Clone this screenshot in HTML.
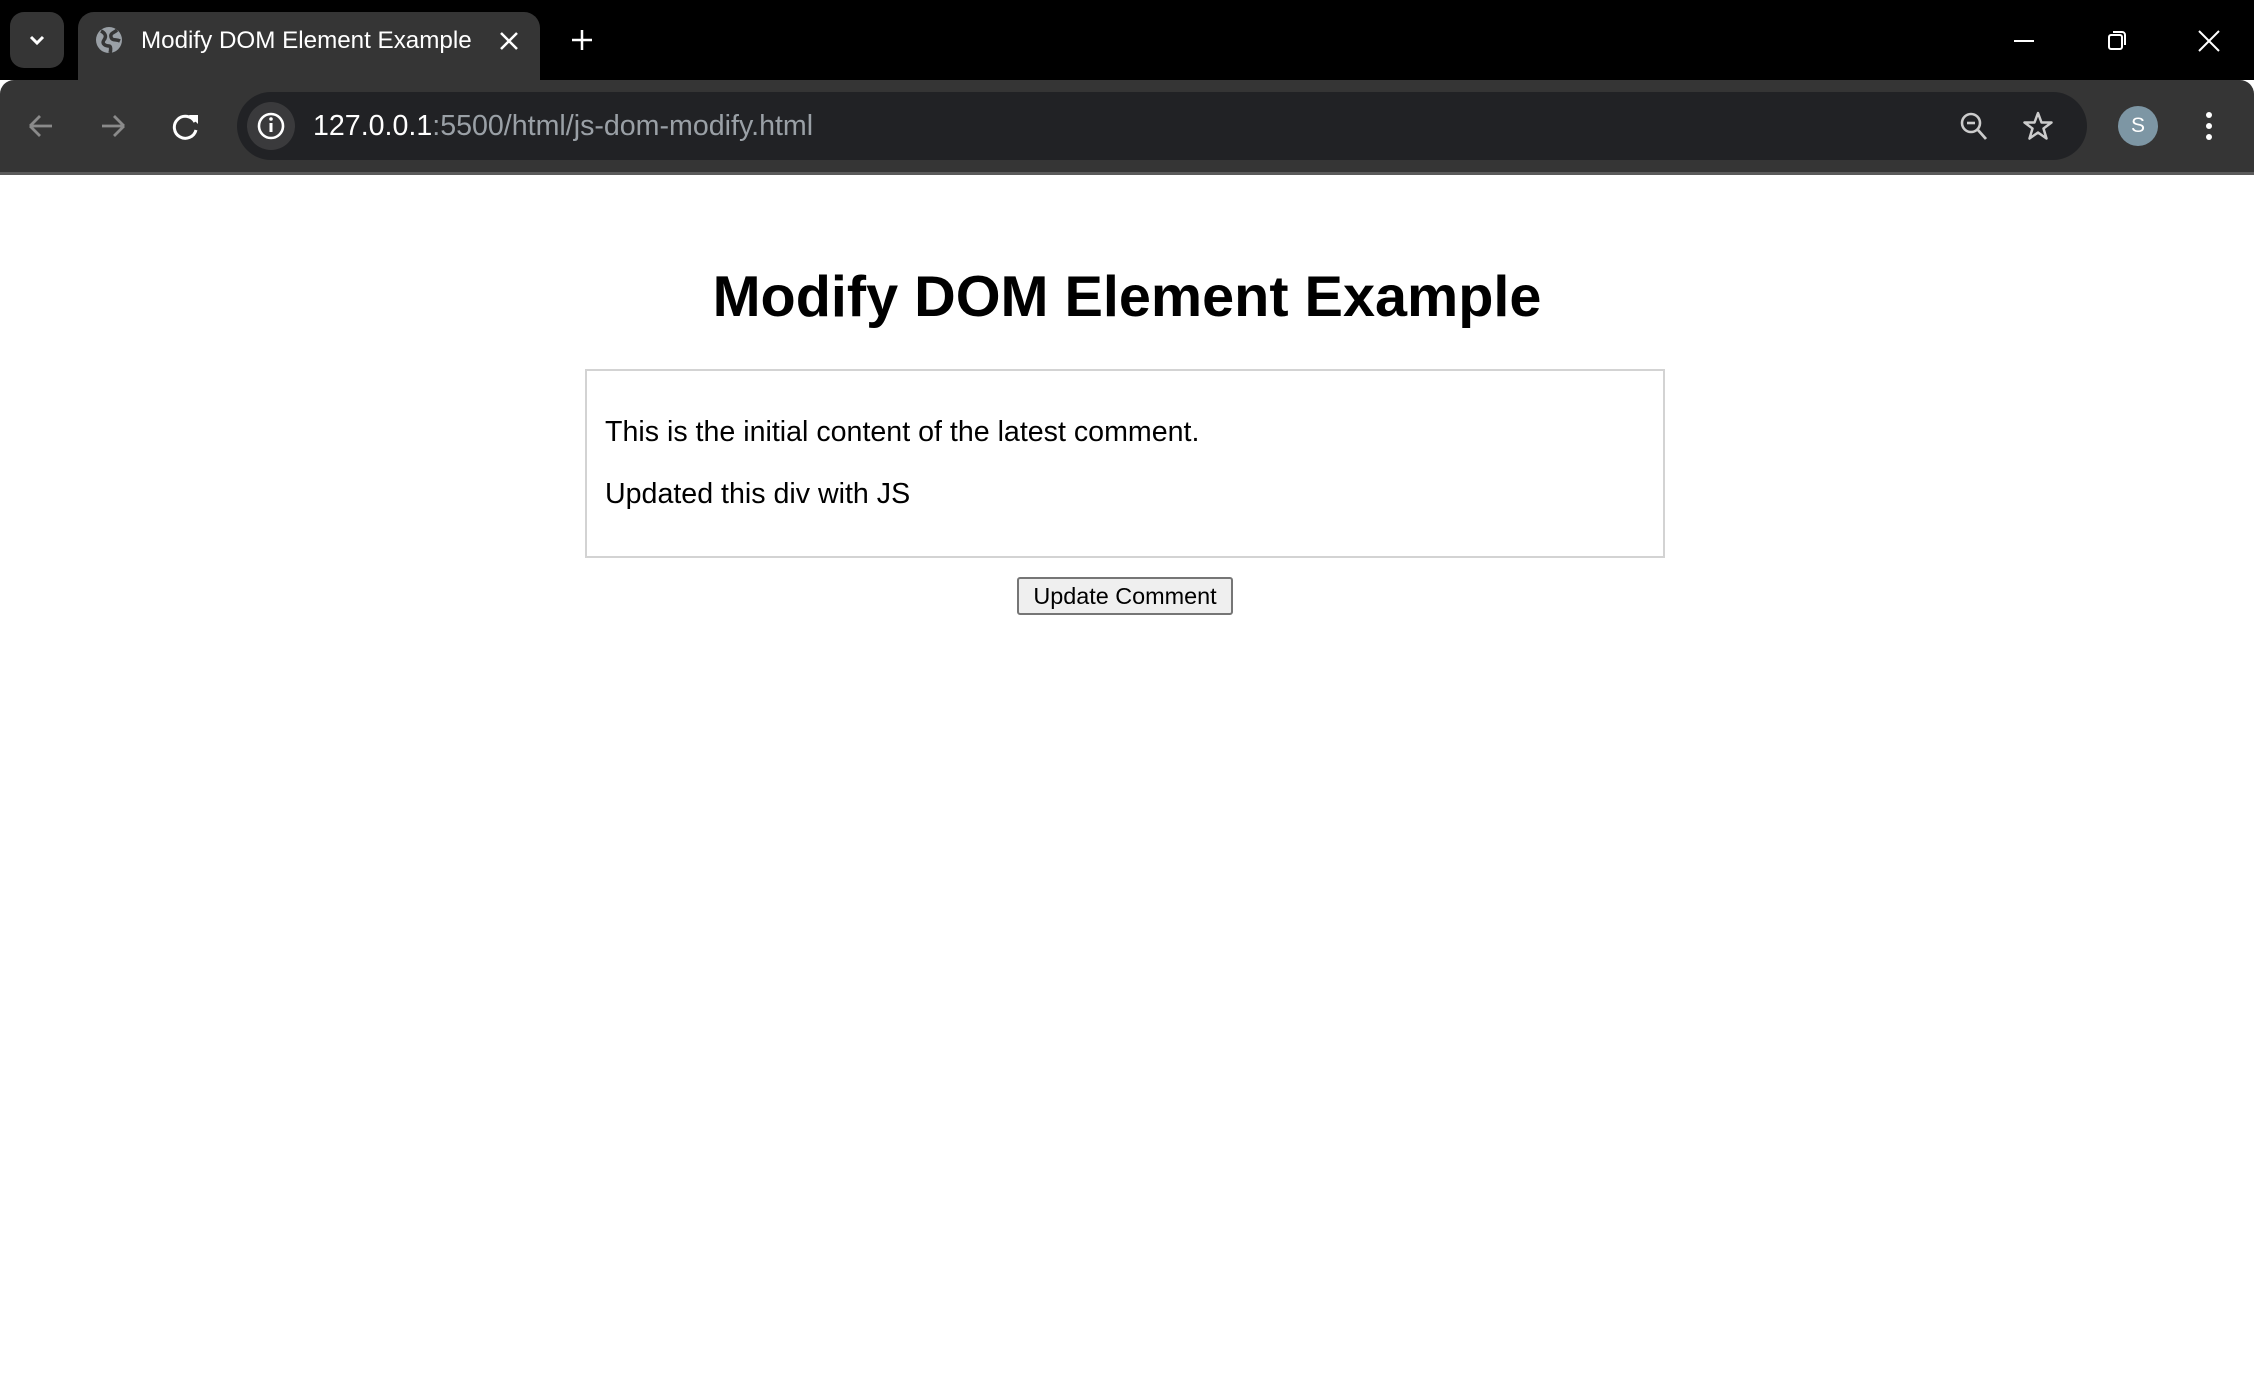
<!DOCTYPE html>
<html><head><meta charset="utf-8"><style>
*{margin:0;padding:0;box-sizing:border-box}
body{width:2254px;height:1396px;overflow:hidden;background:#fff;font-family:"Liberation Sans",Arial,sans-serif;position:relative}
.top{position:absolute;left:0;top:0;width:2254px;height:80px;background:#000}
.tb{position:absolute;left:0;top:80px;width:2254px;height:92px;background:#353535;border-radius:14px 14px 0 0}
.line{position:absolute;left:0;top:172px;width:2254px;height:3px;background:#5a5a5a}
.dd{position:absolute;left:10px;top:12px;width:54px;height:56px;background:#353535;border-radius:14px}
.tab{position:absolute;left:78px;top:12px;width:462px;height:70px;background:#353535;border-radius:16px 16px 0 0}
.t{position:absolute;color:#fff;white-space:nowrap}
.addr{position:absolute;left:237px;top:92px;width:1850px;height:68px;background:#212225;border-radius:34px}
.info{position:absolute;left:247px;top:102px;width:48px;height:48px;border-radius:24px;background:#3a3a3c}
h1{position:absolute;left:0;width:2254px;top:262px;text-align:center;font-size:57.6px;font-weight:bold;line-height:70px}
.box{position:absolute;left:585px;top:369px;width:1080px;height:189px;border:2px solid #d3d3d3}
.p{position:absolute;left:605px;font-size:28.6px;color:#000;white-space:nowrap}
.btn{position:absolute;left:1017px;top:577px;width:216px;height:38px;border:2px solid #767676;background:#efefef;border-radius:3px;font-size:23.4px;text-align:center;line-height:34px}
</style></head><body>
<div class="top"></div>
<div class="tb"></div>
<div class="line"></div>
<div class="dd"><svg width="54" height="56"><path d="M21 25l6 6 6-6" stroke="#fff" stroke-width="3" fill="none"/></svg></div>
<div class="tab"></div>
<svg style="position:absolute;left:95px;top:26px" width="28" height="28"><circle cx="14" cy="14" r="13" fill="#9aa0a6"/><path d="M6 5c4 2 6 5 3 9s2 6 5 6c2 0 2 4 1 7M22 4c-3 3-7 3-6 7s5 2 9 4" stroke="#353535" stroke-width="3.5" fill="none"/></svg>
<div class="t" style="left:141px;top:27px;font-size:24.2px">Modify DOM Element Example</div>
<svg style="position:absolute;left:498px;top:30px" width="22" height="22"><path d="M3 3l16 16M19 3L3 19" stroke="#fff" stroke-width="2.5"/></svg>
<svg style="position:absolute;left:570px;top:28px" width="24" height="24"><path d="M12 2v20M2 12h20" stroke="#fff" stroke-width="2.5"/></svg>
<svg style="position:absolute;left:2010px;top:30px" width="220" height="22"><path d="M4 11h20" stroke="#fff" stroke-width="2"/><rect x="99" y="5" width="13" height="14" rx="2" stroke="#fff" stroke-width="2" fill="none"/><path d="M103 2h9a3 3 0 0 1 3 3v10" stroke="#fff" stroke-width="2" fill="none"/><path d="M189 1l20 20M209 1l-20 20" stroke="#fff" stroke-width="2"/></svg>
<svg style="position:absolute;left:26px;top:110px" width="180" height="32"><path d="M4 16h22M4 16l10-10M4 16l10 10" stroke="#8a8a8a" stroke-width="2.8" fill="none"/><path d="M76 16h22M98 16l-10-10M98 16l-10 10" stroke="#8a8a8a" stroke-width="2.8" fill="none"/><path d="M169 12a11 11 0 1 0 1 8" stroke="#fff" stroke-width="3" fill="none"/><path d="M163 5h9v9z" fill="#fff"/></svg>
<div class="addr"></div>
<div class="info"><svg width="48" height="48"><circle cx="24" cy="24" r="12" stroke="#fff" stroke-width="2.6" fill="none"/><path d="M24 21v9" stroke="#fff" stroke-width="3"/><circle cx="24" cy="17" r="1.8" fill="#fff"/></svg></div>
<div class="t" style="left:313px;top:110px;font-size:28.6px">127.0.0.1<span style="color:#9aa0a6">:5500/html/js-dom-modify.html</span></div>
<svg style="position:absolute;left:1958px;top:110px" width="100" height="34"><circle cx="13" cy="13" r="9" stroke="#ccc" stroke-width="2.6" fill="none"/><path d="M9 13h8" stroke="#ccc" stroke-width="2.6"/><path d="M20 20l8 9" stroke="#ccc" stroke-width="2.8"/><path d="M80 3l3.5 9.5h10l-8 6 3 10-8.5-6-8.5 6 3-10-8-6h10z" stroke="#ccc" stroke-width="2.5" fill="none" stroke-linejoin="round"/></svg>
<div style="position:absolute;left:2118px;top:106px;width:40px;height:40px;border-radius:20px;background:#7d96a4;color:#fff;font-size:21px;text-align:center;line-height:40px">S</div>
<svg style="position:absolute;left:2202px;top:110px" width="14" height="34"><circle cx="7" cy="5" r="3" fill="#fff"/><circle cx="7" cy="16" r="3" fill="#fff"/><circle cx="7" cy="27" r="3" fill="#fff"/></svg>
<h1>Modify DOM Element Example</h1>
<div class="box"></div>
<div class="p" style="top:416px">This is the initial content of the latest comment.</div>
<div class="p" style="top:478px">Updated this div with JS</div>
<div class="btn">Update Comment</div>
</body></html>
